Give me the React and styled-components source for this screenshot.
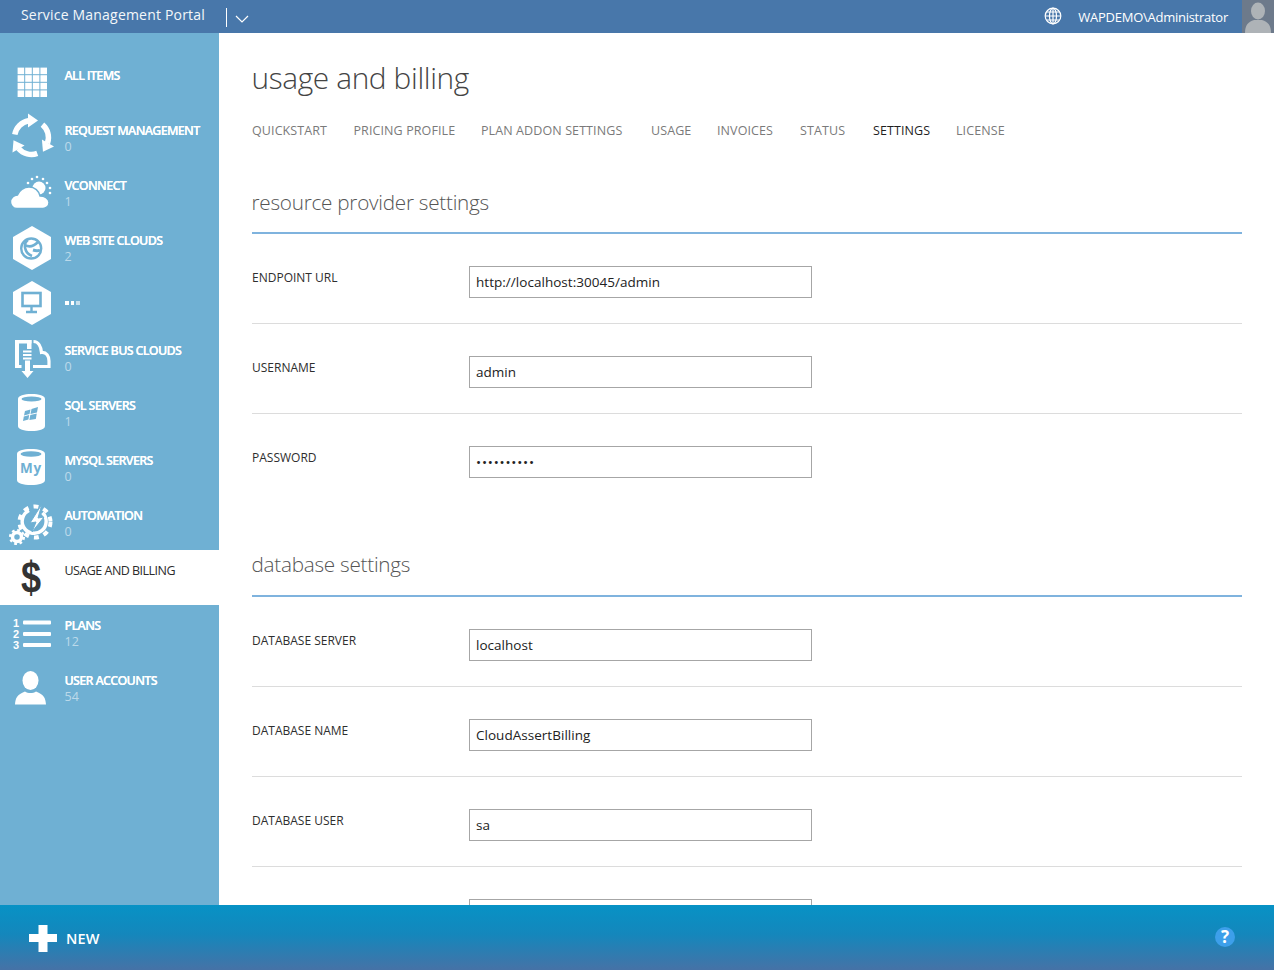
import React from "react";
import styled, { createGlobalStyle } from "styled-components";

const Global = createGlobalStyle`
  html, body { margin: 0; padding: 0; height: 100%; overflow: hidden; background: #fff; }
  #root { height: 100%; }
  * { box-sizing: border-box; }
`;

const FONT = `"Open Sans", "Noto Sans", "Liberation Sans", sans-serif`;
const BLUE = "#6fb0d3";

const Page = styled.div`
  position: relative; width: 1274px; height: 970px; overflow: hidden;
  display: flex; flex-direction: column; font-family: ${FONT};
`;
const TopBar = styled.header`
  flex: 0 0 33px; height: 33px; background: #4877aa; color: #fff;
  display: flex; align-items: center; position: relative;
`;
const Brand = styled.div`
  margin-left: 21px; font-size: 14px; line-height: 30px; height: 30px; margin-top: -3px; letter-spacing: .014em; color: #f4f7fa;
  white-space: nowrap; width: 205px;
`;
const BrandDivider = styled.span`
  width: 1px; height: 19px; background: #fff; margin-top: 2px; margin-right: 8px; display: block;
`;
const Chevron = styled.svg`
  width: 14px; height: 8px; margin-top: 5px; display: block;
`;
const UserArea = styled.div`
  margin-left: auto; display: flex; align-items: center; height: 33px;
`;
const GlobeIcon = styled.svg`
  width: 18px; height: 18px; margin-right: 16px; margin-top: -1px; display: block;
`;
const UserName = styled.span`
  font-size: 13px; letter-spacing: -.02em; margin-right: 14px; white-space: nowrap;
`;
const Avatar = styled.div`
  width: 32px; height: 33px; background: #6d7a8b; overflow: hidden;
`;
const Body = styled.div`
  flex: 1; display: flex; min-height: 0;
`;
const Sidebar = styled.nav`
  flex: 0 0 219px; width: 219px; background: ${BLUE}; padding-top: 22px;
`;
const NavItem = styled.a`
  position: relative; display: block; height: 55px; padding: 9px 0 0 64.5px;
  background: ${(p) => (p.$active ? "#fff" : "transparent")};
  color: ${(p) => (p.$active ? "#2c2c2c" : "#fff")};
`;
const NavIcon = styled.svg`
  position: absolute; left: 0; top: 0; width: 60px; height: 55px; display: block;
`;
const NavTitle = styled.div`
  font-size: 12.5px; line-height: 22px; height: 22px; white-space: nowrap; padding-top: .5px;
  font-weight: ${(p) => (p.$active ? 400 : 600)};
  letter-spacing: ${(p) => (p.$active ? "-.042em" : "-.055em")};
  ${(p) => (p.$active ? "" : "text-shadow: 0 0 .4px #fff;")}
`;
const NavDots = styled.div`
  display: flex; gap: 2px; margin-top: 17px; margin-left: .5px;
  i { width: 3.5px; height: 4px; background: #fff; display: block; }
  i:last-child { opacity: .6; }
`;
const NavCount = styled.div`
  font-size: 12.5px; line-height: 17px; color: rgba(255,255,255,.55); margin-top: -3px;
`;
const Main = styled.main`
  flex: 1; min-width: 0; overflow: hidden; padding: 23px 32px 0 33px;
`;
const Title = styled.h1`
  margin: 0 0 0 -.5px; font-weight: 300; font-size: 29.8px; line-height: 44px; height: 44px; color: #444; letter-spacing: -.012em;
`;
const Tabs = styled.div`
  margin-top: 21px; display: flex; height: 20px;
`;
const Tab = styled.a`
  font-size: 12.5px; line-height: 20px; white-space: nowrap; letter-spacing: .1px;
  position: absolute; left: ${(p) => p.$x}px;
  color: ${(p) => (p.$active ? "#1f1f1f" : "#7a7a7a")};
`;
const SectionTitle = styled.h2`
  margin: ${(p) => (p.$first ? "46px" : "45px")} 0 0 -.5px; font-weight: 300; font-size: 20.7px; line-height: 30px;
  height: ${(p) => (p.$first ? "45px" : "46px")};
  color: #555; letter-spacing: -.012em;
`;
const SectionRule = styled.div`
  height: 2px; background: #7fb3de;
`;
const Row = styled.div`
  display: flex; height: 90px; padding: 32px 0 25px;
  border-bottom: ${(p) => (p.$last ? "0" : "1px solid #dcdcdc")};
`;
const Label = styled.label`
  flex: 0 0 217px; font-size: 12px; line-height: 22px; padding-top: 1px; color: #2e2e2e; letter-spacing: 0;
`;
const Field = styled.input`
  width: 343px; height: 32px; border: 1px solid #a6a6a6; background: #fff; padding: 0 6px; margin: 0;
  font-family: ${FONT}; font-size: 13.5px; color: #222; outline: 0; border-radius: 0;
  letter-spacing: ${(p) => (p.type === "password" ? ".8px" : ".03px")};
`;
const Footer = styled.footer`
  flex: 0 0 65px; height: 65px; position: relative; display: flex; align-items: center;
  background: linear-gradient(180deg, #0792c5 0%, #1487bc 45%, #4672a6 100%);
`;
const PlusIcon = styled.svg`
  width: 28px; height: 27px; margin-left: 29px; margin-top: 1px; display: block;
`;
const NewLabel = styled.span`
  margin-left: 9px; margin-top: 2px; color: #fff; font-size: 14.5px; font-weight: 600; letter-spacing: .01em;
`;
const HelpButton = styled.span`
  position: absolute; left: 1215px; top: 22px; width: 20px; height: 20px; border-radius: 50%;
  background: #3d9fea; color: #fff; font-size: 17px; line-height: 20px; font-weight: 700; text-align: center;
`;

const Hex = ({ children }) => (
  <>
    <polygon points="32,6 51,17 51,39 32,50 13,39 13,17" fill="#fff" />
    {children}
  </>
);

const ICONS = {
  grid: (
    <g fill="#fff">
      {[0, 1, 2, 3].flatMap((r) =>
        [0, 1, 2, 3].map((c) => (
          <rect key={`${r}-${c}`} x={17.6 + c * 7.6} y={12.6 + r * 7.6} width="6.6" height="6.6" />
        ))
      )}
    </g>
  ),
  cycle: (
    <g transform="translate(31.5 27.5)" fill="#fff">
      {[0, 120, 240].map((a) => (
        <g key={a} transform={`rotate(${a})`}>
          <path d="M-16.7 -3A17 17 0 0 1 -3 -16.7" fill="none" stroke="#fff" strokeWidth="5.5" />
          <polygon points="-3.5,-24 6.5,-17 -3.5,-10" />
        </g>
      ))}
    </g>
  ),
  cloud: (
    <g transform="translate(-1 0)">
      <circle cx="40" cy="23" r="6.5" fill="#fff" />
      <g fill="#fff">
        {[[29, 18], [33, 14], [38, 12], [44, 14], [48, 18], [51, 23], [51, 28]].map(([x, y]) => (
          <circle key={`${x}-${y}`} cx={x} cy={y} r="1.3" />
        ))}
      </g>
      <path
        d="M18 43.500C14 43.500 11.500 40 11.500 37C11.500 33 15 30 18.500 30C20 25.500 25 22 30 22C36 22 40 26 41 31C45 31 50 33 50 37.500C50 41 47 43.500 44 43.500Z"
        fill="#fff"
        stroke={BLUE}
        strokeWidth="1.4"
      />
    </g>
  ),
  globe: (
    <Hex>
      <g fill="none" stroke={BLUE}>
        <circle cx="31.200" cy="28.500" r="10" strokeWidth="2.400" />
        <path d="M28 20C23 23 24 33 32 36M25 25C30 28 35 25 38 22" strokeWidth="2.600" />
        <path d="M33 30C36 31 38 31 40 30" strokeWidth="3" />
      </g>
    </Hex>
  ),
  monitor: (
    <Hex>
      <g fill="none" stroke={BLUE}>
        <rect x="22.500" y="18" width="18" height="13" strokeWidth="2.600" />
        <path d="M31.500 32V36M26 37H37" strokeWidth="2.400" />
      </g>
    </Hex>
  ),
  bus: (
    <g fill="#fff">
      <path d="M33.500 11.500C38.500 11.500 41 17 41.500 22.500C46.500 22 49 26 49 31V36.500H33" fill="none" stroke="#fff" strokeWidth="3.200" />
      <rect x="15" y="10" width="4" height="28" />
      <rect x="15" y="35" width="6.500" height="3" />
      <rect x="15" y="10" width="16.500" height="3.500" />
      <polygon points="27,10 31.500,10 31.500,19 27,19" />
      <rect x="23" y="20.500" width="8.500" height="2" />
      <rect x="23" y="24" width="8.500" height="2" />
      <rect x="23" y="27.500" width="8.500" height="2" />
      <path d="M25 30.500H30V41H33.500L27.500 48L21.500 41H25Z" />
    </g>
  ),
  sql: (
    <g>
      <path d="M18 14C18 10.500 24 9 31.500 9S45 10.500 45 14V41C45 44.500 39 46 31.500 46S18 44.500 18 41Z" fill="#fff" />
      <ellipse cx="31.500" cy="14" rx="10" ry="2.600" fill={BLUE} />
      <g fill={BLUE}>
        <polygon points="25,26 30.500,24.500 29.500,29 24,30.500" />
        <polygon points="31.500,24 38,22 37,27.500 30.500,29" />
        <polygon points="23.800,31.500 29.200,30 28.400,34.500 23,36" />
        <polygon points="30.300,30 36.800,28.500 35.800,34 29.400,35" />
      </g>
    </g>
  ),
  mysql: (
    <g>
      <path d="M17 14C17 10.500 23 9 31 9S45 10.500 45 14V40C45 43.500 39 45 31 45S17 43.500 17 40Z" fill="#fff" />
      <ellipse cx="31" cy="14" rx="10.500" ry="2.800" fill={BLUE} />
      <text x="31" y="33" textAnchor="middle" fontFamily={FONT} fontWeight="700" fontSize="13.500" letterSpacing=".8" fill={BLUE}>My</text>
    </g>
  ),
  auto: (
    <g>
      <g fill="none" stroke="#fff">
        <path d="M42.500 17.700A12 12 0 1 1 29 15.500" strokeWidth="3.500" />
        <circle cx="35" cy="27" r="15.500" strokeWidth="4" strokeDasharray="5 5.150" />
        <circle cx="17" cy="42" r="4.500" strokeWidth="3.500" />
        <circle cx="17" cy="42" r="6.800" strokeWidth="2.500" strokeDasharray="2.700 2.640" />
      </g>
      <polygon points="42,9 30,28 36,27 32,37 44,22 38,23" fill="#fff" stroke={BLUE} strokeWidth="1" />
    </g>
  ),
  dollar: (
    <text transform="translate(31 43) scale(.82 1)" textAnchor="middle" fontFamily={`"Liberation Sans", sans-serif`} fontWeight="700" fontSize="44" fill="#333">$</text>
  ),
  plans: (
    <g>
      <g fill="#fff" fontFamily={`"Liberation Sans", sans-serif`} fontWeight="700" fontSize="11">
        <text x="13" y="22">1</text>
        <text x="13" y="33">2</text>
        <text x="13" y="44">3</text>
      </g>
      <rect x="23" y="15.500" width="28" height="4" rx="1" fill="#fff" />
      <rect x="23" y="27" width="28" height="4" rx="1" fill="#fff" />
      <rect x="23" y="38" width="28" height="4" rx="1" fill="#fff" />
    </g>
  ),
  user: (
    <g fill="#fff">
      <ellipse cx="30.500" cy="20.500" rx="8" ry="9.500" />
      <path d="M15 44.500C15.500 38 17 34.500 25 31.500C28 33.500 33 33.500 36 31.500C44 34.500 45.500 38 46 44.500Z" />
    </g>
  ),
};

const NAV = [
  { icon: "grid", title: "ALL ITEMS" },
  { icon: "cycle", title: "REQUEST MANAGEMENT", count: 0 },
  { icon: "cloud", title: "VCONNECT", count: 1 },
  { icon: "globe", title: "WEB SITE CLOUDS", count: 2 },
  { icon: "monitor", dots: true },
  { icon: "bus", title: "SERVICE BUS CLOUDS", count: 0 },
  { icon: "sql", title: "SQL SERVERS", count: 1 },
  { icon: "mysql", title: "MYSQL SERVERS", count: 0 },
  { icon: "auto", title: "AUTOMATION", count: 0 },
  { icon: "dollar", title: "USAGE AND BILLING", active: true },
  { icon: "plans", title: "PLANS", count: 12 },
  { icon: "user", title: "USER ACCOUNTS", count: 54 },
];

const TABS = [
  ["QUICKSTART", 252], ["PRICING PROFILE", 353.5], ["PLAN ADDON SETTINGS", 481], ["USAGE", 651],
  ["INVOICES", 717], ["STATUS", 800], ["SETTINGS", 873, true], ["LICENSE", 956],
];

const Form = ({ rows, lastFlat }) =>
  rows.map(([label, value, type], i) => (
    <Row key={label || i} $last={lastFlat && i === rows.length - 1}>
      <Label>{label}</Label>
      <Field type={type || "text"} defaultValue={value} readOnly />
    </Row>
  ));

export default function App() {
  return (
    <Page>
      <Global />
      <TopBar>
        <Brand>Service Management Portal</Brand>
        <BrandDivider />
        <Chevron viewBox="0 0 14 8">
          <path d="M1 1L7 7L13 1" fill="none" stroke="#fff" strokeWidth="1.2" />
        </Chevron>
        <UserArea>
          <GlobeIcon viewBox="0 0 18 18">
            <g fill="none" stroke="#fff" strokeWidth="1.2">
              <circle cx="9" cy="9" r="7.800" />
              <ellipse cx="9" cy="9" rx="3.500" ry="7.800" />
              <path d="M1.200 9H16.800M2.500 5H15.500M2.500 13H15.500M9 1V17" />
            </g>
          </GlobeIcon>
          <UserName>WAPDEMO\Administrator</UserName>
          <Avatar>
            <svg width="32" height="33" viewBox="0 0 32 33" style={{ display: "block" }}>
              <ellipse cx="16" cy="11" rx="7" ry="8.500" fill="#aeb3b7" />
              <path d="M3 33C3 25 6 22 12 20H20C26 22 29 25 29 33Z" fill="#aeb3b7" />
            </svg>
          </Avatar>
        </UserArea>
      </TopBar>
      <Body>
        <Sidebar>
          {NAV.map((n, i) => (
            <NavItem key={i} $active={n.active}>
              <NavIcon viewBox="0 0 60 55">{ICONS[n.icon]}</NavIcon>
              {n.dots ? (
                <NavDots><i /><i /><i /></NavDots>
              ) : (
                <NavTitle $active={n.active}>{n.title}</NavTitle>
              )}
              {n.count !== undefined && <NavCount>{n.count}</NavCount>}
            </NavItem>
          ))}
        </Sidebar>
        <Main>
          <Title>usage and billing</Title>
          <Tabs>
            {TABS.map(([t, x, a]) => (
              <Tab key={t} $x={x} $active={a}>{t}</Tab>
            ))}
          </Tabs>
          <SectionTitle $first>resource provider settings</SectionTitle>
          <SectionRule />
          <Form
            lastFlat
            rows={[
              ["ENDPOINT URL", "http://localhost:30045/admin"],
              ["USERNAME", "admin"],
              ["PASSWORD", "0123456789", "password"],
            ]}
          />
          <SectionTitle>database settings</SectionTitle>
          <SectionRule />
          <Form
            rows={[
              ["DATABASE SERVER", "localhost"],
              ["DATABASE NAME", "CloudAssertBilling"],
              ["DATABASE USER", "sa"],
              ["", ""],
            ]}
          />
        </Main>
      </Body>
      <Footer>
        <PlusIcon viewBox="0 0 28 27">
          <path d="M9.500 0H18.500V9H28V17H18.500V27H9.500V17H0V9H9.500Z" fill="#fff" />
        </PlusIcon>
        <NewLabel>NEW</NewLabel>
        <HelpButton>?</HelpButton>
      </Footer>
    </Page>
  );
}
